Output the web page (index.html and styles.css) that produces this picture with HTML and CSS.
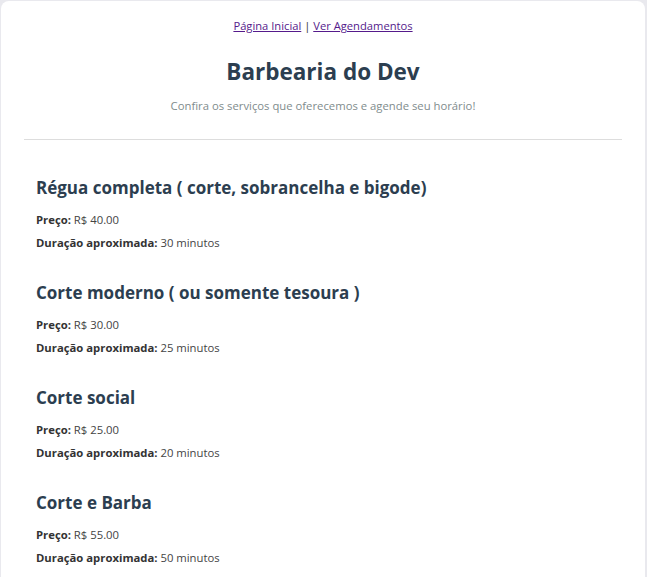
FILE: index.html
```html
<!DOCTYPE html>
<html lang="pt-BR">
<head>
<meta charset="utf-8">
<title>Barbearia do Dev</title>
<link rel="stylesheet" href="styles.css">
</head>
<body>
<div class="card">
  <nav class="nav"><a href="#">Página Inicial</a> | <a href="#">Ver Agendamentos</a></nav>
  <h1 class="title">Barbearia do Dev</h1>
  <p class="subtitle">Confira os serviços que oferecemos e agende seu horário!</p>
  <hr class="divider">
  <div class="services">
    <div class="service">
      <h3 class="service-name">Régua completa ( corte, sobrancelha e bigode)</h3>
      <p class="service-info"><strong>Preço:</strong> R$ 40.00</p>
      <p class="service-info"><strong>Duração aproximada:</strong> 30 minutos</p>
    </div>
    <div class="service">
      <h3 class="service-name">Corte moderno ( ou somente tesoura )</h3>
      <p class="service-info"><strong>Preço:</strong> R$ 30.00</p>
      <p class="service-info"><strong>Duração aproximada:</strong> 25 minutos</p>
    </div>
    <div class="service">
      <h3 class="service-name">Corte social</h3>
      <p class="service-info"><strong>Preço:</strong> R$ 25.00</p>
      <p class="service-info"><strong>Duração aproximada:</strong> 20 minutos</p>
    </div>
    <div class="service">
      <h3 class="service-name">Corte e Barba</h3>
      <p class="service-info"><strong>Preço:</strong> R$ 55.00</p>
      <p class="service-info"><strong>Duração aproximada:</strong> 50 minutos</p>
    </div>
  </div>
</div>
</body>
</html>
```

FILE: styles.css
```css
html, body {
  margin: 0;
  padding: 0;
}
body {
  background: #e9e9ee;
  padding: 1px 2px 0 1px;
  font-family: "Open Sans", "Noto Sans", sans-serif;
  color: #333;
  height: 576px;
  overflow: hidden;
}
.card {
  background: #fff;
  border-radius: 8px;
  padding: 15px 23px 20px;
  min-height: 600px;
}
.nav {
  text-align: center;
  font-size: 11.2px;
  line-height: 20px;
  color: #333;
}
.nav a {
  color: #551a8b;
}
.title {
  text-align: center;
  font-size: 22.5px;
  font-weight: 700;
  color: #2c3e50;
  margin: 21px 0 0;
  line-height: 30px;
}
.subtitle {
  text-align: center;
  font-size: 11.3px;
  color: #7f8c8d;
  margin: 10px 0 0;
  line-height: 18px;
}
.divider {
  border: 0;
  border-top: 1px solid #ddd;
  margin: 24px 0 0;
}
.services {
  padding: 0 12px;
  margin-top: 35px;
}
.service {
  margin-bottom: 29px;
}
.service-name {
  font-size: 17px;
  font-weight: 700;
  color: #2c3e50;
  margin: 0 0 11px;
  line-height: 26px;
}
.service-info {
  font-size: 11.3px;
  line-height: 16px;
  margin: 0 0 7px;
  color: #444;
}
.service-info strong {
  color: #333;
}
```
